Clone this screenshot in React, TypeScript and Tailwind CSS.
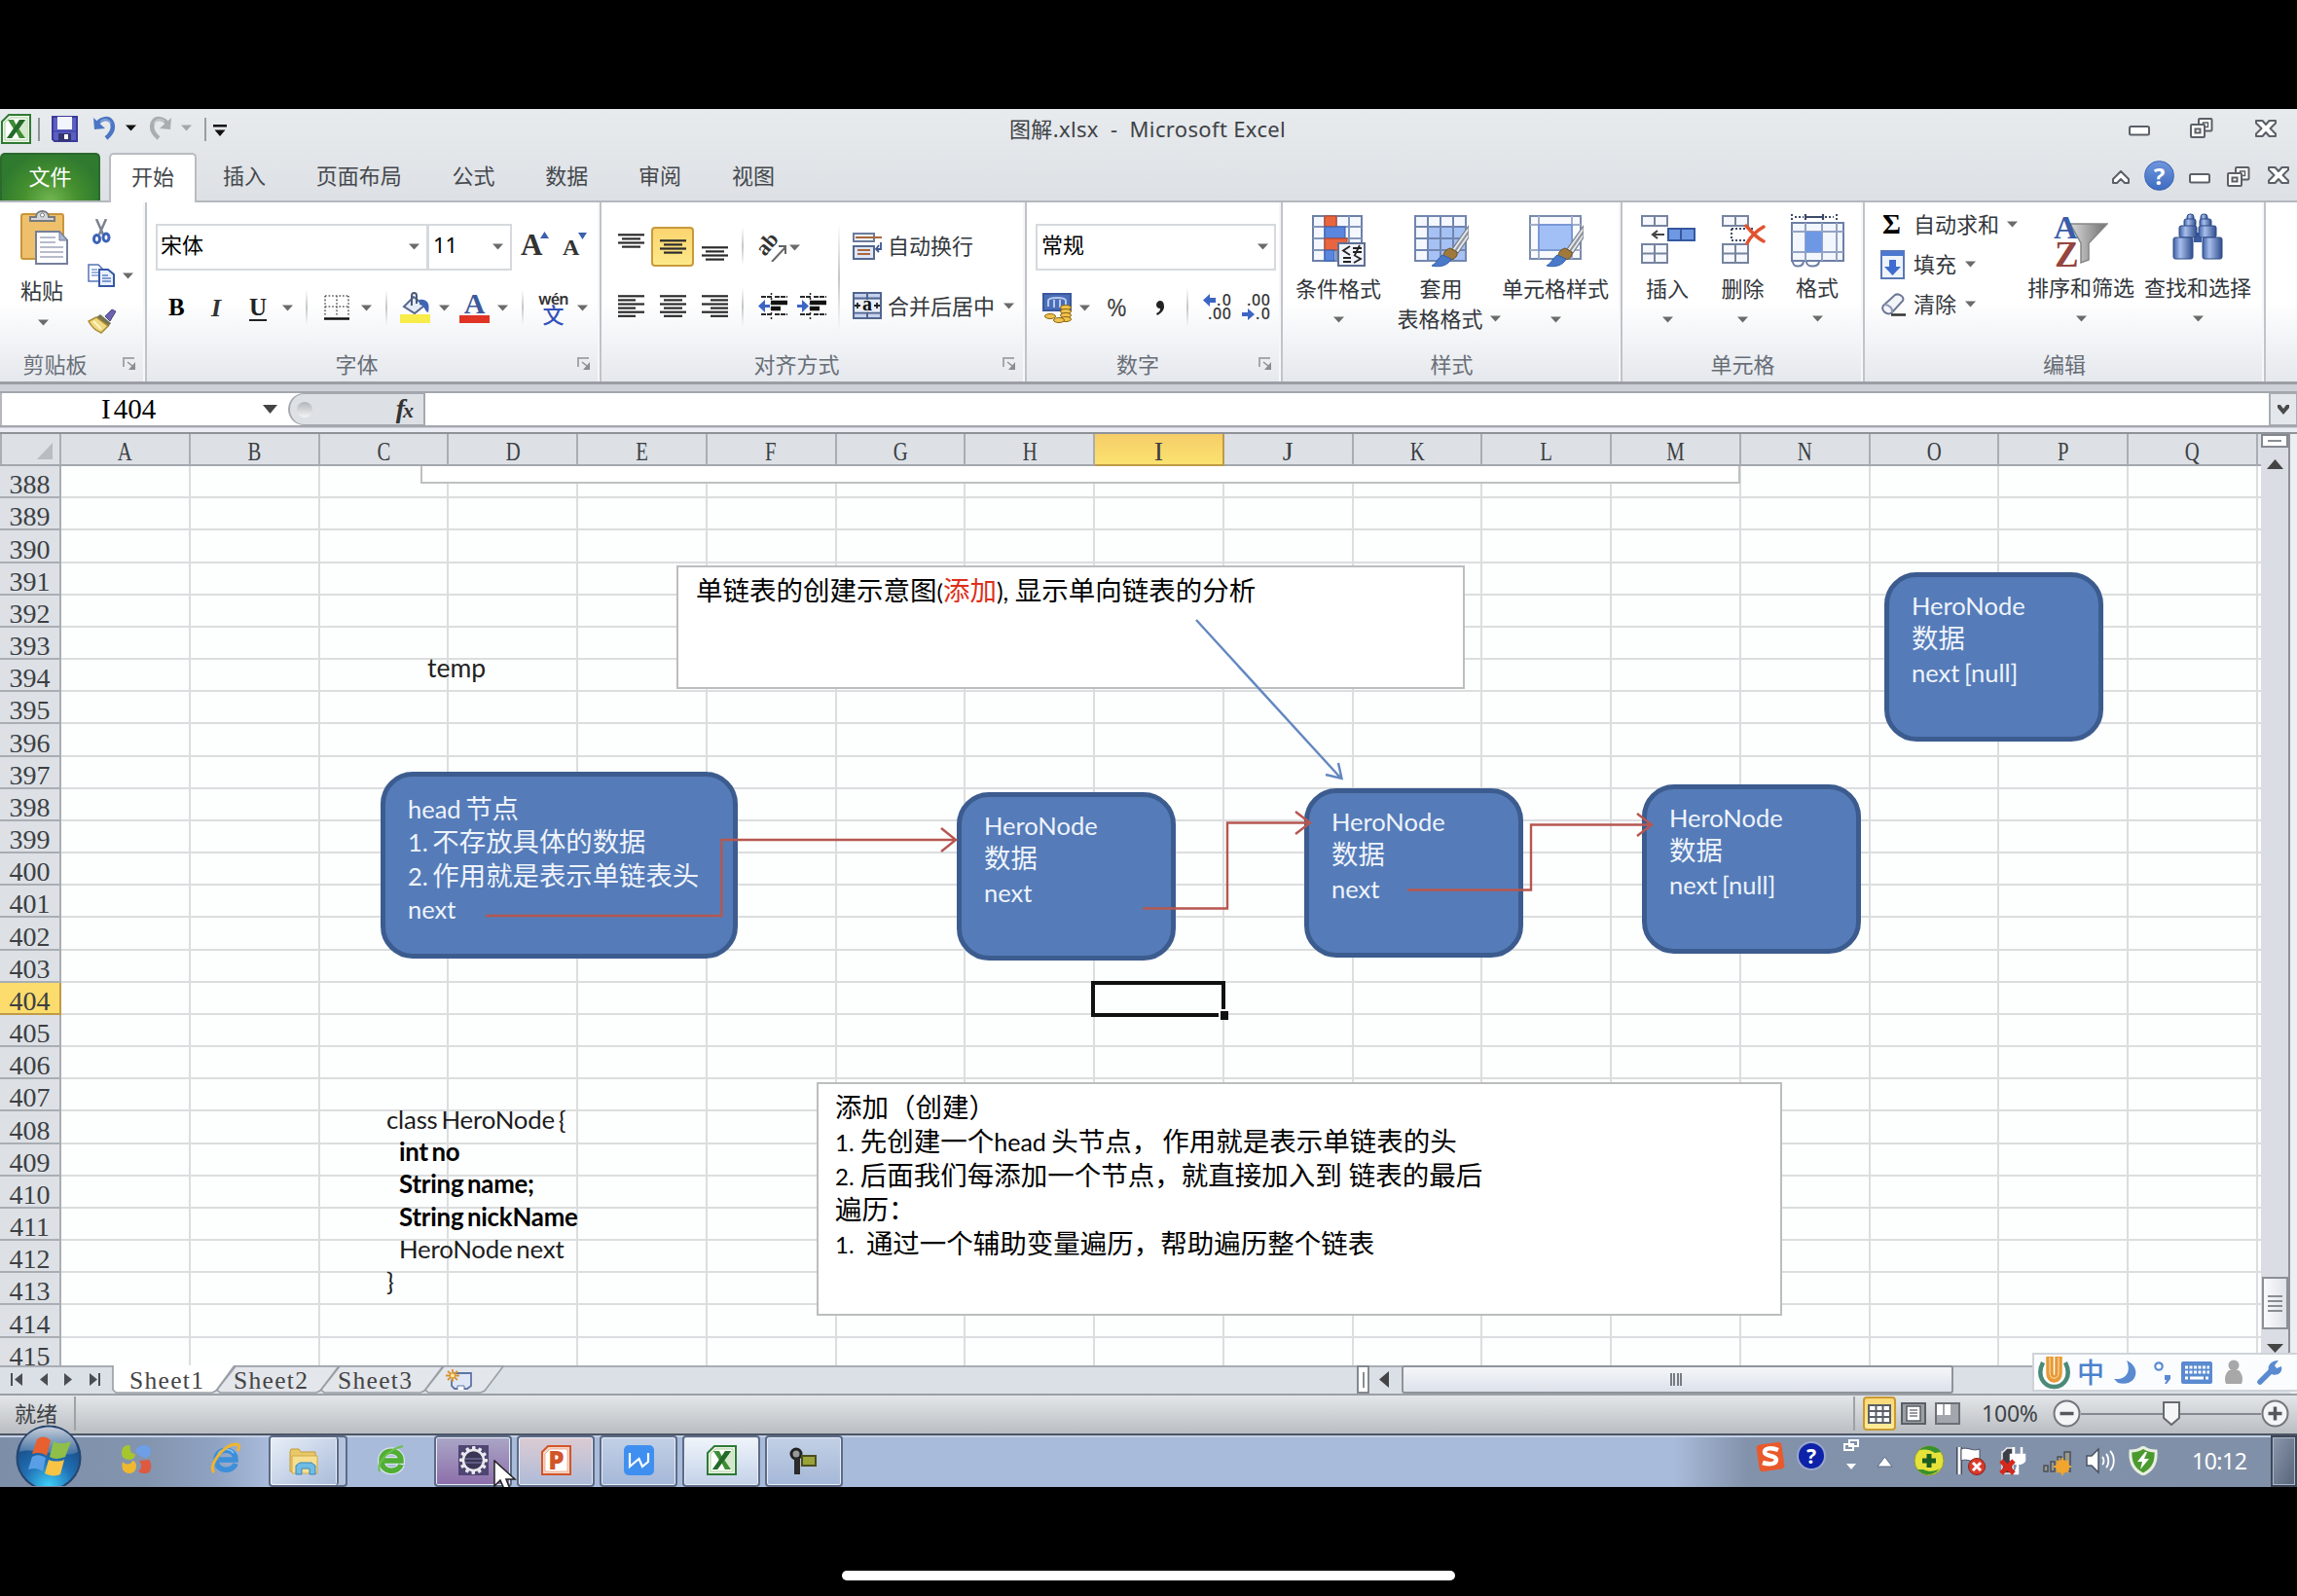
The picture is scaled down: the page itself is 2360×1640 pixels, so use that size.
import React from "react";

const UI = "font-['Noto_Sans','Noto_Sans_CJK_SC',sans-serif]";
const SONG = "font-['Liberation_Serif','Noto_Sans_CJK_SC',serif]";
const BOX = "font-['Lato','Noto_Sans_CJK_SC',sans-serif]";

type IconProps = { className?: string };

function Svg({ w, h, className = "", children }: { w: number; h: number; className?: string; children: React.ReactNode }) {
  return (
    <svg width={w} height={h} viewBox={`0 0 ${w} ${h}`} fill="none" className={"block shrink-0 " + className}>
      {children}
    </svg>
  );
}

function Caret({ className = "", color = "#6b6b6b" }: IconProps & { color?: string }) {
  return (
    <Svg w={11} h={7} className={className}>
      <path d="M0 0.5H11L5.5 6.5Z" fill={color} />
    </Svg>
  );
}

function Sep({ className = "" }: IconProps) {
  return <div className={"w-[2px] shrink-0 bg-gradient-to-b from-transparent via-[#c3c6ca] to-transparent " + className} />;
}

/* ---------- title bar ---------- */

function ExcelLogo({ className = "" }: IconProps) {
  return (
    <Svg w={31} h={31} className={className}>
      <path d="M1 8L8 1H30V30H1Z" fill="#eef5ea" stroke="#2f7a35" strokeWidth="2" />
      <path d="M4 9L9 4H27V27H4Z" fill="#fff" stroke="#a9d09a" />
      <path d="M18 6H26V25H18Z" fill="#d5e8cd" />
      <path d="M7 6H13L16 12L20 6H25L18.500 15.500L25 25H19L15.500 18.500L11 25H6L13 15.500Z" fill="#3e8d36" />
      <path d="M19 6H25L11 25H6Z" fill="#236b2b" />
    </Svg>
  );
}

function SaveIcon({ className = "" }: IconProps) {
  return (
    <Svg w={27} h={27} className={className}>
      <path d="M1 1H26V26H3L1 24Z" fill="#5b5fc4" stroke="#3b3b99" strokeWidth="2" />
      <path d="M6 1H21V14H6Z" fill="#f3f5fc" />
      <path d="M7 18H20V26H7Z" fill="#33356f" />
      <path d="M13 19H17V24H13Z" fill="#fff" />
      <path d="M2 15H25V17H2Z" fill="#4a4cae" />
    </Svg>
  );
}

function UndoIcon({ className = "", color = "#4b76c4", flip = false }: IconProps & { color?: string; flip?: boolean }) {
  return (
    <Svg w={24} h={25} className={(flip ? "-scale-x-100 " : "") + className}>
      <path d="M4 9C9 2 17 1 20 7C22 12 20 18 14 23" stroke={color} strokeWidth="4.500" />
      <path d="M1 2L2 14L13 13Z" fill={color} />
      <path d="M8 6C13 2 17 4 19 8" stroke="#ffffff" strokeOpacity=".35" strokeWidth="1.500" />
    </Svg>
  );
}

function MinIcon({ className = "" }: IconProps) {
  return (
    <Svg w={22} h={11} className={className}>
      <rect x="1" y="1" width="20" height="8.500" rx="1.500" fill="#fff" stroke="#5b6068" strokeWidth="2" />
    </Svg>
  );
}

function RestoreIcon({ className = "" }: IconProps) {
  return (
    <Svg w={24} h={21} className={className}>
      <rect x="9" y="1" width="13.500" height="12.500" rx="1" fill="#fff" stroke="#5b6068" strokeWidth="2" />
      <rect x="13.500" y="5" width="5" height="4.500" stroke="#5b6068" strokeWidth="1.500" />
      <rect x="1" y="7" width="14" height="13" rx="1" fill="#fff" stroke="#5b6068" strokeWidth="2" />
      <rect x="5.500" y="11.500" width="5" height="4" stroke="#5b6068" strokeWidth="2" />
    </Svg>
  );
}

function CloseIcon({ className = "" }: IconProps) {
  return (
    <Svg w={22} h={18} className={className}>
      <path d="M1 1H7.500L11 5L14.500 1H21V3.500L15.500 9L21 14.500V17H14.500L11 13L7.500 17H1V14.500L6.500 9L1 3.500Z" fill="#fff" stroke="#5b6068" strokeWidth="2" strokeLinejoin="round" />
    </Svg>
  );
}

function TitleBar() {
  return (
    <div className="relative flex h-[45px] items-start">
      <ExcelLogo className="mt-[5px] ml-[1px]" />
      <div className="mt-[9px] ml-[7px] h-[24px] w-[2px] bg-[#8f9398]" />
      <SaveIcon className="mt-[7px] ml-[12px]" />
      <UndoIcon className="mt-[7px] ml-[15px]" />
      <Caret className="mt-[16px] ml-[10px]" color="#111" />
      <UndoIcon className="mt-[7px] ml-[13px]" color="#a9adb1" flip />
      <Caret className="mt-[16px] ml-[9px]" color="#a3a6aa" />
      <div className="mt-[9px] ml-[13px] h-[24px] w-[2px] bg-[#9a9ea3]" />
      <Svg w={14} h={12} className="mt-[16px] ml-[7px]">
        <path d="M0 0H14V2.500H0ZM1.500 5.500H12.500L7 12Z" fill="#111" />
      </Svg>
      <div className="mt-[4px] ml-[804px] w-[300px] text-[22px] leading-[32px] whitespace-pre tracking-[0.35px] text-[#3f4347]">图解.xlsx  -  Microsoft Excel</div>
      <div className="ml-auto flex pr-[21px]">
        <MinIcon className="mt-[17px]" />
        <RestoreIcon className="mt-[9px] ml-[41px]" />
        <CloseIcon className="mt-[11px] ml-[43px]" />
      </div>
    </div>
  );
}

/* ---------- ribbon tabs ---------- */

const tabs = ["插入", "页面布局", "公式", "数据", "审阅", "视图"];

function TabRow() {
  return (
    <div className="flex h-[51px] items-end border-b-2 border-[#b4b8be] text-[22px] text-[#44484d]">
      <div className="flex h-[49px] w-[103px] items-center justify-center rounded-t-[5px] border-2 border-b-0 border-[#2a6a2d] bg-[radial-gradient(ellipse_at_50%_105%,#74b854_0%,#46902f_40%,#2f7a2f_75%)] pb-[3px] text-white">文件</div>
      <div className="z-10 -mb-[2px] ml-[9px] flex h-[51px] w-[90px] items-center justify-center rounded-t-[5px] border-2 border-b-0 border-[#b9bcc1] bg-white pb-[5px]">开始</div>
      <div className="ml-[1px] flex h-[49px] items-center pb-[3px]">
        {tabs.map((t) => (
          <div key={t} className="px-[25.900px]">{t}</div>
        ))}
      </div>
      <div className="ml-auto flex h-[49px] items-start pr-[8px]">
        <Svg w={18} h={14} className="mt-[18px]">
          <path d="M1 9L9 1L17 9V13H13L9 9L5 13H1Z" fill="#fff" stroke="#5b6068" strokeWidth="2" strokeLinejoin="round" />
        </Svg>
        <div className="mt-[8px] ml-[15px] flex size-[31px] items-center justify-center rounded-full border border-[#3a64b4] bg-gradient-to-b from-[#6f95dc] to-[#3e6cc0] text-[24px] leading-none font-bold text-white">?</div>
        <MinIcon className="mt-[21px] ml-[15px]" />
        <RestoreIcon className="mt-[14px] ml-[17px]" />
        <CloseIcon className="mt-[14px] ml-[18px]" />
      </div>
    </div>
  );
}

/* ---------- ribbon icons ---------- */

function Launcher({ className = "" }: IconProps) {
  return (
    <Svg w={14} h={13} className={className}>
      <path d="M1 10V1H12" stroke="#a4a8ad" strokeWidth="2" />
      <path d="M5 5L10 9" stroke="#8a8e93" strokeWidth="1.500" />
      <path d="M13 5V13H6Z" fill="#8a8e93" />
    </Svg>
  );
}

function PasteIcon() {
  return (
    <Svg w={50} h={57}>
      <rect x="1" y="4" width="43" height="46" rx="2" fill="#eec06b" stroke="#c9963c" strokeWidth="2" />
      <path d="M10 11V7H16C16 -1 29 -1 29 7H35V11Z" fill="#d5d7da" stroke="#777b80" strokeWidth="2" />
      <circle cx="22.500" cy="5" r="2" fill="#fff" stroke="#777b80" />
      <path d="M16 22H40L48 31V55H16Z" fill="#fdfdff" stroke="#74809b" strokeWidth="2" />
      <path d="M40 22V31H48Z" fill="#aab6d2" stroke="#74809b" />
      <path d="M20 28H36M20 33H36M20 38H44M20 43H44M20 48H44" stroke="#b7bccb" strokeWidth="2" />
    </Svg>
  );
}

function CutIcon({ className = "" }: IconProps) {
  return (
    <Svg w={19} h={26} className={className}>
      <path d="M4 0L11 16M14 0L7 16" stroke="#7b8390" strokeWidth="2.500" />
      <ellipse cx="4.500" cy="20.500" rx="3" ry="4" stroke="#3c63b8" strokeWidth="3" />
      <ellipse cx="14" cy="19" rx="3" ry="4" stroke="#3c63b8" strokeWidth="3" />
    </Svg>
  );
}

function CopyIcon({ className = "" }: IconProps) {
  return (
    <Svg w={28} h={24} className={className}>
      <path d="M1 1H11L15 5V18H1Z" fill="#fff" stroke="#5474b8" strokeWidth="1.500" />
      <path d="M4 6H10M4 9H11M4 12H11" stroke="#7f9bd2" strokeWidth="1.500" />
      <path d="M12 6H21L27 11V23H12Z" fill="#e9f0fc" stroke="#3558a6" strokeWidth="2" />
      <path d="M15 12H21M15 15H24M15 18H24" stroke="#5c7fc6" strokeWidth="1.500" />
    </Svg>
  );
}

function BrushIcon({ className = "" }: IconProps) {
  return (
    <Svg w={30} h={26} className={className}>
      <path d="M18 8L25 1L29 3L23 13Z" fill="#6b62b0" stroke="#4b4586" />
      <path d="M13 6L24 15L21 19L9 9Z" fill="#77744f" />
      <path d="M9 9L21 18L14 25C9 23 4 19 1 13Z" fill="#f0d97e" stroke="#a98c37" strokeWidth="1.500" />
      <path d="M6 13L14 21" stroke="#fff6c8" strokeWidth="2" />
    </Svg>
  );
}

function Lines({ rows, className = "", h = 24 }: { rows: [number, number][]; className?: string; h?: number }) {
  return (
    <Svg w={27} h={h} className={className}>
      {rows.map(([a, b], i) => (
        <path key={i} d={`M${a} ${i * 4.1 + 1.3}H${b}`} stroke="#2b2b2b" strokeWidth="2.200" />
      ))}
    </Svg>
  );
}

const shortLines: [number, number][] = [[0, 27], [4, 23], [0, 27], [4, 23]];
const leftLines: [number, number][] = [[0, 27], [0, 18], [0, 27], [0, 18], [0, 27], [0, 18]];
const midLines: [number, number][] = [[0, 27], [4, 23], [0, 27], [4, 23], [0, 27], [4, 23]];
const rightLines: [number, number][] = [[0, 27], [9, 27], [0, 27], [9, 27], [0, 27], [9, 27]];

function BordersIcon({ className = "" }: IconProps) {
  return (
    <Svg w={26} h={26} className={className}>
      <path d="M1 1H25M1 12H25M1 1V22M13 1V22M25 1V22" stroke="#5c5c5c" strokeWidth="1.600" strokeDasharray="1.600 2" />
      <path d="M0 24.500H26" stroke="#111" strokeWidth="2.500" />
    </Svg>
  );
}

function BucketIcon({ className = "" }: IconProps) {
  return (
    <Svg w={31} h={32} className={className}>
      <path d="M14 5L25 14L15 22L4 15Z" fill="#e5ebf6" stroke="#56688d" strokeWidth="2" />
      <path d="M12 14V4C12 0 17 0 17 4V12" stroke="#4b5a79" strokeWidth="2" />
      <path d="M20 8C28 7 31 12 29 21C25 20 26 14 20 13Z" fill="#3f66b4" />
      <rect y="23" width="31" height="9" fill="#f7ec49" />
    </Svg>
  );
}

function FontColorIcon({ className = "" }: IconProps) {
  return (
    <div className={"flex w-[31px] shrink-0 flex-col items-center " + className}>
      <div className={"h-[21px] text-[30px] leading-[22px] font-bold text-[#3c5a9a] " + SONG}>A</div>
      <div className="mt-[2px] h-[8px] w-[31px] bg-[#e03424]" />
    </div>
  );
}

function PhoneticIcon({ className = "" }: IconProps) {
  return (
    <div className={"flex w-[31px] shrink-0 flex-col items-center " + className}>
      <div className="h-[13px] text-[16px] leading-[12px] font-semibold tracking-[-0.8px] text-[#333]">wén</div>
      <div className="h-[18px] text-[22px] leading-[19px] font-medium text-[#3350b8]">文</div>
    </div>
  );
}

function OrientIcon({ className = "" }: IconProps) {
  return (
    <Svg w={30} h={28} className={className}>
      <text x="0" y="0" transform="translate(7 23) rotate(-50)" fontFamily="Liberation Serif" fontWeight="700" fontSize="22" fill="#333">ab</text>
      <path d="M14 28L28 13M28 20V12H21" stroke="#666" strokeWidth="2" />
    </Svg>
  );
}

function IndentIcon({ className = "", inward = false }: IconProps & { inward?: boolean }) {
  return (
    <Svg w={30} h={28} className={className}>
      <path d="M3 4H14M17 4H30M3 22H14M17 22H30" stroke="#2b2b2b" strokeWidth="2.200" strokeDasharray="5 1" />
      <path d="M13 10H30M13 16H23" stroke="#111" strokeWidth="4.500" />
      <path d="M13.500 0V28" stroke="#222" strokeWidth="1.500" strokeDasharray="2 3" />
      {inward ? <path d="M0 12H5V7L12 13.500L5 20V15H0Z" fill="#3c66c4" /> : <path d="M12 12H7V7L0 13.500L7 20V15H12Z" fill="#3c66c4" />}
    </Svg>
  );
}

function WrapIcon({ className = "" }: IconProps) {
  return (
    <Svg w={30} h={28} className={className}>
      <rect x="1" y="1" width="21" height="8" fill="#eef2fa" stroke="#6b7b9c" strokeWidth="2" />
      <path d="M3 5H30" stroke="#a9673f" strokeWidth="2" />
      <rect x="1" y="14" width="21" height="13" fill="#dfe6f4" stroke="#54688f" strokeWidth="2" />
      <path d="M5 18H18M5 22H18" stroke="#a9673f" strokeWidth="2" />
      <path d="M29 10V17H25M27 13L24 17L27 20" stroke="#3b5691" strokeWidth="1.800" />
    </Svg>
  );
}

function MergeIcon({ className = "" }: IconProps) {
  return (
    <Svg w={30} h={28} className={className}>
      <rect x="1" y="1" width="28" height="26" fill="#c5d2ec" stroke="#51658f" strokeWidth="2" />
      <path d="M15 1V27M1 6.500H29M1 21.500H29" stroke="#51658f" strokeWidth="2" />
      <rect x="2" y="8" width="26" height="12.500" fill="#e9eefa" />
      <text x="10" y="19" fontFamily="Liberation Serif" fontWeight="700" fontSize="20" fill="#111">a</text>
      <path d="M2 14H8M5 11V17M22 14H28M25 11V17" stroke="#222" strokeWidth="1.800" />
    </Svg>
  );
}

function CurrencyIcon({ className = "" }: IconProps) {
  return (
    <Svg w={31} h={31} className={className}>
      <rect x="1" y="1" width="28" height="17" fill="#4a6eb8" stroke="#3a589c" strokeWidth="2" />
      <path d="M6 14V8C6 4 24 4 24 8V14M12 15V7M18 15V7" stroke="#b8c9ec" strokeWidth="2" />
      {[15, 19, 23, 27].map((y) => (
        <ellipse key={y} cx="24" cy={y} rx="5.500" ry="2.500" fill="#f0c34e" stroke="#8c6412" />
      ))}
      <ellipse cx="8" cy="24" rx="5.500" ry="2.500" fill="#f0c34e" stroke="#8c6412" />
      <ellipse cx="17" cy="28" rx="5.500" ry="2.500" fill="#f0c34e" stroke="#8c6412" />
    </Svg>
  );
}

function DecimalIcon({ className = "", less = false }: IconProps & { less?: boolean }) {
  return (
    <Svg w={30} h={28} className={className}>
      {less ? (
        <g>
          <text x="5" y="12" textLength="24" fontFamily="Noto Sans" fontWeight="500" fontSize="16" fill="#333">.00</text>
          <text x="14" y="26" textLength="15" fontFamily="Noto Sans" fontWeight="500" fontSize="16" fill="#333">.0</text>
          <path d="M0 19H6V15L13 21L6 27V23H0Z" fill="#3c66c4" />
        </g>
      ) : (
        <g>
          <text x="14" y="12" textLength="15" fontFamily="Noto Sans" fontWeight="500" fontSize="16" fill="#333">.0</text>
          <text x="5" y="26" textLength="24" fontFamily="Noto Sans" fontWeight="500" fontSize="16" fill="#333">.00</text>
          <path d="M13 4H7V0L0 6.500L7 13V9H13Z" fill="#3c66c4" />
        </g>
      )}
    </Svg>
  );
}

function Brush() {
  return (
    <g>
      <path d="M57 12L40 36L46 40L57 24Z" fill="#e4e6ea" stroke="#777d88" strokeWidth="1.200" />
      <path d="M57 18L43 38" stroke="#8d939c" strokeWidth="2" />
      <path d="M38 35C34 36 31 39 31 43L38 47C43 46 46 43 45 39Z" fill="#a07a3c" stroke="#6b4f23" />
      <path d="M30 42C25 45 24 51 19 53C27 55 36 53 39 46Z" fill="#4a79c9" stroke="#3260ac" />
    </g>
  );
}

function CondIcon() {
  return (
    <Svg w={57} h={55}>
      <rect x="2" y="2" width="50" height="46" fill="#f4f7fd" stroke="#6d80a8" strokeWidth="2" />
      <path d="M14 2V48M26 2V48M39 2V48M2 13H52M2 25H52M2 37H52" stroke="#8496bb" strokeWidth="2" />
      <rect x="14" y="2" width="12" height="11" fill="#e8653f" stroke="#b9421f" />
      <rect x="14" y="13" width="21" height="12" fill="#5a86dd" stroke="#335eb0" />
      <rect x="14" y="25" width="23" height="12" fill="#e8653f" stroke="#b9421f" />
      <rect x="14" y="37" width="10" height="11" fill="#5a86dd" stroke="#335eb0" />
      <rect x="28" y="30" width="27" height="23" fill="#f1f4fb" stroke="#5f6f93" strokeWidth="2" />
      <path d="M40 33L33 37.500L40 42M33 45H41M33 49H41M43 35H52M43 39H52M50 32L45 42M44 42L51 46L44 50" stroke="#222" strokeWidth="1.800" />
    </Svg>
  );
}

function TableIcon() {
  return (
    <Svg w={57} h={55}>
      <rect x="2" y="2" width="52" height="46" fill="#f4f7fd" />
      <rect x="15" y="13" width="39" height="35" fill="#a6c1f3" />
      <path d="M2 2H54V48H2ZM15 2V48M28 2V48M41 2V48M2 13H54M2 25H54M2 37H54" stroke="#7186b0" strokeWidth="2" />
      <Brush />
    </Svg>
  );
}

function CellStyleIcon() {
  return (
    <Svg w={57} h={55}>
      <path d="M2 2H54V46H2Z" fill="#f8fafe" stroke="#7a8aac" strokeWidth="2" />
      <path d="M11 2V46M45 2V46M2 11H54M2 37H54" stroke="#a3afc9" strokeWidth="2" />
      <rect x="11" y="11" width="34" height="26" fill="#a3c0f6" stroke="#6d8fd1" strokeWidth="1.500" />
      <Brush />
    </Svg>
  );
}

function GridPair({ y, h }: { y: number; h: number }) {
  return (
    <g stroke="#76849f" strokeWidth="2">
      <rect x="2" y={y} width="26" height={h} fill="#f6f8fd" />
      <path d={`M15 ${y}V${y + h}`} />
    </g>
  );
}

function InsertCellsIcon() {
  return (
    <Svg w={57} h={52}>
      <GridPair y={2} h={10} />
      <GridPair y={31} h={19} />
      <path d="M2 40.500H28" stroke="#76849f" strokeWidth="2" />
      <rect x="29" y="15" width="27" height="12" fill="#6f98e4" stroke="#34589f" strokeWidth="2" />
      <path d="M42 15V27" stroke="#34589f" strokeWidth="2" />
      <path d="M25 21H13M18 17L13 21L18 25" stroke="#444" strokeWidth="2.200" />
    </Svg>
  );
}

function DeleteCellsIcon() {
  return (
    <Svg w={46} h={52}>
      <GridPair y={2} h={10} />
      <GridPair y={31} h={19} />
      <path d="M2 40.500H28" stroke="#76849f" strokeWidth="2" />
      <path d="M11 15H34M11 27H30M11 15V27" stroke="#3d4a67" strokeWidth="2" strokeDasharray="2 2" />
      <path d="M26 12C32 19 38 25 44 28M44 13C37 17 31 22 27 30" stroke="#e0532f" strokeWidth="3.500" strokeLinecap="round" />
    </Svg>
  );
}

function FormatCellsIcon() {
  return (
    <Svg w={57} h={56}>
      <path d="M2 1V7M48 1V7M5 4H14M36 4H45" stroke="#3d4a67" strokeWidth="2" strokeDasharray="2 2" />
      <path d="M15 4H35M16 1V7M34 1V7" stroke="#3d4a67" strokeWidth="2.200" />
      <rect x="2" y="10" width="53" height="39" fill="#f2f6fd" stroke="#6d7fa6" strokeWidth="2" />
      <path d="M16 10V49M33 10V49M48 10V49M2 19H55M2 40H55" stroke="#93a3c4" strokeWidth="2" />
      <rect x="16" y="19" width="17" height="21" fill="#6f98e4" />
      <path d="M3 50C3 56 13 56 14 50M17 50C17 56 29 56 30 50" fill="#fff" stroke="#6d7fa6" strokeWidth="2" />
    </Svg>
  );
}

function FillDownIcon({ className = "" }: IconProps) {
  return (
    <Svg w={26} h={30} className={className}>
      <rect x="1" y="1" width="23" height="28" fill="#eef3fc" stroke="#5b78b5" strokeWidth="2" />
      <rect x="1" y="1" width="23" height="5" fill="#4d78cf" />
      <path d="M9 10H16V17H21L12.500 26L4 17H9Z" fill="#3f6cd0" />
    </Svg>
  );
}

function EraserIcon({ className = "" }: IconProps) {
  return (
    <Svg w={26} h={24} className={className}>
      <path d="M3 13L15 2C19 0 25 4 23 8L12 20C7 24 0 18 3 13Z" fill="#f3f5fa" stroke="#6d7894" strokeWidth="2" />
      <path d="M4 12C9 12 13 16 12 20" stroke="#8d98b4" strokeWidth="2" />
      <path d="M11 22.500H26" stroke="#333" strokeWidth="2.500" />
    </Svg>
  );
}

function SortFilterIcon() {
  return (
    <Svg w={56} h={56}>
      <defs>
        <linearGradient id="fn" x1="0" x2="1"><stop offset="0" stopColor="#d9d9d9" /><stop offset="1" stopColor="#6f6f6f" /></linearGradient>
      </defs>
      <path d="M17 11H55L36 31V48L28 51V31Z" fill="url(#fn)" stroke="#868686" strokeWidth="1.500" />
      <text x="0" y="26" fontFamily="Liberation Serif" fontWeight="700" fontSize="34" fill="#3a5caa">A</text>
      <text x="1" y="55" fontFamily="Liberation Serif" fontWeight="700" fontSize="37" fill="#95453f">Z</text>
    </Svg>
  );
}

function FindIcon() {
  return (
    <Svg w={52} h={50}>
      <defs>
        <linearGradient id="bn" x1="0" x2="1"><stop offset="0" stopColor="#3d5fa4" /><stop offset=".35" stopColor="#a8bfec" /><stop offset="1" stopColor="#2f4d8d" /></linearGradient>
      </defs>
      <rect x="22" y="20" width="8" height="10" fill="#3b5ba0" />
      {[0, 30].map((x) => (
        <g key={x} fill="url(#bn)" stroke="#2f4b86" strokeWidth="1">
          <rect x={x ? 29 : 15} y="1" width="7" height="8" rx="3" />
          <rect x={x ? 28 : 12} y="6" width="12" height="8" rx="2" />
          <rect x={x ? 27 : 7} y="13" width="18" height="12" rx="2" />
          <rect x={x ? 31 : 1} y="25" width="20" height="22" rx="2" />
        </g>
      ))}
    </Svg>
  );
}

/* ---------- ribbon ---------- */

function Group({ w, label, shift = "", launcher = false, children }: { w: string; label: string; shift?: string; launcher?: boolean; children: React.ReactNode }) {
  return (
    <div className={"flex h-full shrink-0 flex-col border-r-2 border-[#c0c3c8] shadow-[inset_-2px_0_0_#f6f7f8] " + w}>
      <div className="h-[149px]">{children}</div>
      <div className="flex h-[33px] items-center text-[22px] text-[#686e77]">
        <div className={"flex-1 text-center leading-[30px] " + shift}>{label}</div>
        {launcher && <Launcher className="mr-[9px] -ml-[23px]" />}
      </div>
    </div>
  );
}

function BigButton({ w, icon, label, label2 = "", pad = "pt-[12px]" }: { w: string; icon: React.ReactNode; label: string; label2?: string; pad?: string }) {
  return (
    <div className={"flex shrink-0 flex-col items-center text-[22px] leading-[31px] text-[#33373c] " + w + " " + pad}>
      <div className="flex h-[57px] items-start">{icon}</div>
      <div className="mt-[4px] whitespace-nowrap">{label}</div>
      {label2 ? (
        <div className="flex items-center gap-[7px] pl-[16px] whitespace-nowrap">
          {label2}
          <Caret />
        </div>
      ) : (
        <Caret className="mt-[13px]" />
      )}
    </div>
  );
}

function Ribbon() {
  return (
    <div className="flex h-[187px] border-b-[3px] border-[#9b9fa5] bg-gradient-to-b from-white from-55% to-[#e5e8ed] text-[22px] text-[#33373c]">
      <Group w="w-[151px]" label="剪贴板" shift="pr-[36px]" launcher>
        <div className="flex pl-[21px]">
          <div className="flex w-[50px] flex-col pt-[8px]">
            <PasteIcon />
            <div className="mt-[10px] leading-[30px]">粘贴</div>
            <Caret className="mt-[15px] ml-[18px]" />
          </div>
          <div className="ml-[19px] flex flex-col">
            <CutIcon className="mt-[17px] ml-[5px]" />
            <div className="mt-[20px] flex items-center gap-[8px]">
              <CopyIcon />
              <Caret />
            </div>
            <BrushIcon className="mt-[22px]" />
          </div>
        </div>
      </Group>

      <Group w="w-[467px]" label="字体" shift="pr-[34px]" launcher>
        <div className="flex h-[70px] pt-[22px] pl-[9px]">
          <div className="flex h-[48px] w-[280px] items-center justify-between border-2 border-[#d6d9dd] bg-white pr-[7px] pb-[6px] pl-[3px] text-black">
            宋体
            <Caret className="mt-[4px]" />
          </div>
          <div className="-ml-[1px] flex h-[48px] w-[87px] items-center justify-between border-2 border-[#d6d9dd] bg-white pr-[7px] pb-[6px] pl-[4px] text-black">
            11
            <Caret className="mt-[4px]" />
          </div>
          <div className={"mt-[4px] ml-[9px] flex font-bold text-[#333] " + SONG}>
            <span className="w-[22px] text-[31px] leading-[36px]">A</span>
            <Svg w={9} h={7} className="-ml-[2px] mt-[4px]"><path d="M0 7L4.500 0L9 7Z" fill="#3c5fae" /></Svg>
            <span className="ml-[14px] w-[17px] text-[24px] leading-[41px]">A</span>
            <Svg w={9} h={7} className="-ml-[1px] mt-[5px]"><path d="M0 0L4.500 7L9 0Z" fill="#3c5fae" /></Svg>
          </div>
        </div>
        <div className="flex h-[76px] items-center pl-[22px]">
          <span className={"w-[44px] text-[25px] font-bold text-black " + SONG}>B</span>
          <span className={"w-[39px] text-[26px] font-bold italic text-[#333] " + SONG}>I</span>
          <span className={"w-[34px] border-none text-[25px] font-bold text-[#222] underline decoration-2 underline-offset-4 " + SONG}>U</span>
          <Caret />
          <Sep className="ml-[13px] h-[36px]" />
          <BordersIcon className="ml-[17px]" />
          <Caret className="ml-[12px]" />
          <Sep className="ml-[14px] h-[36px]" />
          <BucketIcon className="ml-[13px]" />
          <Caret className="ml-[9px]" />
          <FontColorIcon className="ml-[10px]" />
          <Caret className="ml-[8px]" />
          <Sep className="ml-[14px] h-[36px]" />
          <PhoneticIcon className="ml-[15px]" />
          <Caret className="ml-[9px]" />
        </div>
      </Group>

      <Group w="w-[437px]" label="对齐方式" shift="pr-[34px]" launcher>
        <div className="flex h-full">
          <div className="flex w-[243px] flex-col">
            <div className="flex h-[70px] items-start pt-[25px]">
              <Lines rows={shortLines} h={16} className="mt-[7px] ml-[17px]" />
              <div className="ml-[7px] flex h-[41px] w-[44px] items-center justify-center rounded-[4px] border-2 border-[#c79b3c] bg-gradient-to-b from-[#fbd56f] to-[#fde98a]">
                <Lines rows={shortLines} h={16} />
              </div>
              <Lines rows={shortLines} h={16} className="mt-[20px] ml-[8px]" />
              <Sep className="ml-[14px] h-[40px]" />
              <OrientIcon className="mt-[8px] ml-[15px]" />
              <Caret className="mt-[18px] ml-[2px]" />
            </div>
            <div className="flex h-[74px] items-center">
              <Lines rows={leftLines} className="ml-[17px]" />
              <Lines rows={midLines} className="ml-[16px]" />
              <Lines rows={rightLines} className="ml-[16px]" />
              <Sep className="ml-[14px] h-[40px]" />
              <IndentIcon className="ml-[15px]" />
              <IndentIcon className="ml-[10px]" inward />
            </div>
          </div>
          <Sep className="mt-[22px] h-[110px]" />
          <div className="ml-[13px] flex flex-col">
            <div className="flex h-[52px] items-center gap-[6px] pt-[37px]">
              <WrapIcon />
              自动换行
            </div>
            <div className="mt-[34px] flex h-[40px] items-center gap-[6px]">
              <MergeIcon />
              合并后居中
              <Caret className="ml-[3px]" />
            </div>
          </div>
        </div>
      </Group>

      <Group w="w-[263px]" label="数字" shift="pr-[33px]" launcher>
        <div className="flex h-[70px] pt-[22px] pl-[9px]">
          <div className="flex h-[48px] w-[247px] items-center justify-between border-2 border-[#d6d9dd] bg-white pr-[6px] pb-[6px] pl-[4px] text-black">
            常规
            <Caret className="mt-[4px]" />
          </div>
        </div>
        <div className="flex h-[76px] items-center pl-[16px]">
          <CurrencyIcon />
          <Caret className="ml-[7px]" />
          <span className="ml-[17px] w-[22px] text-[25px] text-[#444]">%</span>
          <Svg w={10} h={15} className="ml-[28px]">
            <path d="M5 0C8 0 9 3 9 6C9 10 6 13 2 15L1 13C4 12 5 10 5 8C2 8 1 6 1 4C1 2 3 0 5 0Z" fill="#222" />
          </Svg>
          <Sep className="ml-[22px] h-[40px]" />
          <DecimalIcon className="ml-[15px]" />
          <DecimalIcon className="ml-[10px]" less />
        </div>
      </Group>

      <Group w="w-[349px]" label="样式">
        <div className="flex">
          <BigButton w="w-[114px]" icon={<CondIcon />} label="条件格式" />
          <BigButton w="w-[97px]" icon={<TableIcon />} label="套用" label2="表格格式" />
          <BigButton w="w-[138px]" icon={<CellStyleIcon />} label="单元格样式" />
        </div>
      </Group>

      <Group w="w-[249px]" label="单元格">
        <div className="flex pl-[17px]">
          <BigButton w="w-[58px]" icon={<InsertCellsIcon />} label="插入" />
          <BigButton w="ml-[20px] w-[57px]" icon={<DeleteCellsIcon />} label="删除" />
          <BigButton w="ml-[19px] w-[58px]" icon={<FormatCellsIcon />} label="格式" pad="pt-[11px]" />
        </div>
      </Group>

      <Group w="w-[412px]" label="编辑">
        <div className="flex">
          <div className="flex w-[160px] flex-col pt-[2px] pl-[16px]">
            <div className="flex h-[41px] items-center">
              <span className={"w-[34px] pl-[2px] text-[29px] leading-none font-bold text-black " + SONG}>Σ</span>
              自动求和
              <Caret className="ml-[8px]" />
            </div>
            <div className="flex h-[41px] items-center">
              <FillDownIcon className="mr-[8px]" />
              填充
              <Caret className="ml-[9px]" />
            </div>
            <div className="flex h-[41px] items-center">
              <EraserIcon className="mr-[8px]" />
              清除
              <Caret className="ml-[9px]" />
            </div>
          </div>
          <BigButton w="ml-[2px] w-[120px]" icon={<SortFilterIcon />} label="排序和筛选" pad="pt-[11px]" />
          <BigButton w="w-[120px]" icon={<FindIcon />} label="查找和选择" pad="pt-[11px]" />
        </div>
      </Group>
    </div>
  );
}

/* ---------- formula bar ---------- */

function FormulaBar() {
  return (
    <div className="flex h-[51px] flex-col bg-[#cdd1d7]">
      <div className="mt-[7px] flex h-[37px] border-y-2 border-[#a3a7ad] bg-white">
        <div className="flex w-[296px] items-center border-l-2 border-[#b4b7bc]">
          <span className={"ml-[100px] w-[168px] text-[29px] leading-none text-black " + SONG}><span className="mr-[3px] ml-[2px]">I</span>404</span>
          <Svg w={15} h={9}><path d="M0 0H15L7.500 9Z" fill="#444" /></Svg>
        </div>
        <div className="flex w-[141px] items-center justify-between rounded-l-full border-y border-r-2 border-l-2 border-[#a5a9af] bg-[#dde1e6] pr-[12px] pl-[7px]">
          <div className="size-[16px] rounded-full bg-gradient-to-b from-[#b1b5ba] to-[#f4f5f6]" />
          <span className={"text-[28px] leading-[20px] font-bold tracking-[-2px] italic text-[#333] " + SONG}>f<span className="text-[22px]">x</span></span>
        </div>
        <div className="flex-1" />
        <div className="flex w-[29px] items-center justify-center border border-l-2 border-[#a9adb3] bg-[#e4e7eb]">
          <Svg w={14} h={11}><path d="M1 1H4L7 5L10 1H13V4L7 11L1 4Z" fill="#4a4a4a" /></Svg>
        </div>
      </div>
      <div className="mt-[1px] h-[4px] bg-[#e9ecf2]" />
      <div className="mt-auto h-[2px] bg-[#8f9399]" />
    </div>
  );
}

/* ---------- worksheet ---------- */

const columns = "ABCDEFGHIJKLMNOPQ".split("");
const rows = Array.from({ length: 28 }, (_, i) => 388 + i);

function Node({ pos, lines }: { pos: string; lines: string[] }) {
  return (
    <div className={"absolute rounded-[33px] border-[5px] border-[#3c5c8f] bg-[#557cb9] pl-[23px] text-[25.500px] leading-[34.700px] [word-spacing:-2px] whitespace-pre text-[#eef3fb] " + pos + " " + BOX}>
      {lines.map((l) => (
        <div key={l} className="h-[34.400px]">
          {l.split(/([\u4e00-\u9fff]+)/).map((part, i) =>
            i % 2 ? (
              <span key={i} className="text-[27.400px]">
                {part}
              </span>
            ) : (
              part
            )
          )}
        </div>
      ))}
    </div>
  );
}

const hero = ["HeroNode", "数据", "next"];
const heroEnd = ["HeroNode", "数据", "next [null]"];

function Drawing() {
  return (
    <div className={"absolute inset-0 overflow-hidden " + BOX}>
      <div className="absolute -top-[20px] left-[370px] h-[38px] w-[1356px] border-2 border-[#bfc0c2] bg-white" />
      <div className="absolute top-[102px] left-[633px] h-[127px] w-[810px] border-2 border-[#bcbdbf] bg-white pt-[6px] pl-[18px] text-[27.500px] leading-[36px] whitespace-pre text-black">
        单链表的创建示意图<span className="text-[24px]">(</span>
        <span className="text-[#dd2f1b]">添加</span>
        <span className="text-[25px]">), </span>显示单向链表的分析
      </div>
      <div className="absolute top-[191px] left-[377px] text-[26.500px] leading-[32px] text-[#222]">temp</div>

      <Node pos="top-[314px] left-[329px] h-[192px] w-[367px] pt-[16px]" lines={["head 节点", "1. 不存放具体的数据", "2. 作用就是表示单链表头", "next"]} />
      <Node pos="top-[335px] left-[921px] h-[173px] w-[225px] pt-[12px]" lines={hero} />
      <Node pos="top-[331px] left-[1278px] h-[174px] w-[225px] pt-[12px]" lines={hero} />
      <Node pos="top-[327px] left-[1625px] h-[174px] w-[225px] pt-[12px]" lines={heroEnd} />
      <Node pos="top-[109px] left-[1874px] h-[174px] w-[225px] pt-[12px]" lines={heroEnd} />

      <div className="absolute top-[655px] left-[335px] text-[25.800px] leading-[33.200px] tracking-[-0.2px] [word-spacing:-2.500px] whitespace-pre text-[#1c1c1c]">
        <div>{"class HeroNode {"}</div>
        <div className="pl-[13px] font-bold text-black">int no</div>
        <div className="pl-[13px] font-bold text-black">String name;</div>
        <div className="pl-[13px] font-bold text-black">String nickName</div>
        <div className="pl-[13px]">HeroNode next</div>
        <div>{"}"}</div>
      </div>

      <div className="absolute top-[633px] left-[777px] h-[240px] w-[992px] border-2 border-[#bcbdbf] bg-white pt-[6px] pl-[17px] text-[27.500px] leading-[35.200px] whitespace-pre text-black">
        <div className="h-[35.100px]">添加（创建）</div>
        <div className="h-[35.100px]"><span className="text-[24px]">1. </span>先创建一个<span className="text-[25px] [word-spacing:-1px]">head </span>头节点，<span className="text-[16px]"> </span>作用就是表示单链表的头</div>
        <div className="h-[35.100px]"><span className="text-[24px]">2. </span>后面我们每添加一个节点，就直接加入到 链表的最后</div>
        <div className="h-[35.100px]">遍历：</div>
        <div className="h-[35.100px]"><span className="text-[24px]">1.  </span>通过一个辅助变量遍历，帮助遍历整个链表</div>
      </div>

      <svg width="2262" height="925" viewBox="62 478 2262 925" fill="none" className="absolute top-0 left-0">
        <g stroke="#b65750" strokeWidth="2.400">
          <path d="M499 940H741.500V862H981" />
          <path d="M967 850L982 862L967 874" />
          <path d="M1174 932.500H1261V844.500H1346" />
          <path d="M1331 833L1346 844.500L1331 856" />
          <path d="M1446 913.500H1573V846.500H1696" />
          <path d="M1682 835L1697 846.500L1682 858" />
        </g>
        <path d="M1229 636L1378 799M1375 783L1378.500 799L1362 795" stroke="#6387c0" strokeWidth="2.400" />
      </svg>

      <div className="absolute top-[529px] left-[1059px] h-[37px] w-[138px] border-[4px] border-[#111]" />
      <div className="absolute top-[558px] left-[1190px] h-[11px] w-[10px] border-t-2 border-l-2 border-white bg-[#111]" />
    </div>
  );
}

function Worksheet() {
  return (
    <div className={"flex h-[957px] " + SONG}>
      <div className="flex w-[2323px] flex-col overflow-hidden">
        <div className="flex h-[33px] shrink-0 border-b-2 border-[#a3a8ae] bg-[#dde1e6] text-[28px] text-[#3c3f43]">
          <div className="flex w-[63px] shrink-0 items-end justify-end border-r-2 border-l-2 border-[#a9aeb4] pr-[7px] pb-[5px]">
            <Svg w={16} h={17}><path d="M16 0V17H0Z" fill="#b9bdc2" /></Svg>
          </div>
          {columns.map((c) => (
            <div
              key={c}
              className={
                "flex w-[132.750px] shrink-0 items-center justify-center border-r-2 pt-[5px] leading-none " +
                (c === "I" ? "-mb-[2px] border-b-2 border-[#c09a45] bg-gradient-to-b from-[#f6cd68] to-[#fbe26f] pb-[1px]" : "border-[#a9aeb4]")
              }
            >
              <span className={c === "I" || c === "J" ? "" : "scale-x-[0.74]"}>{c}</span>
            </div>
          ))}
        </div>
        <div className="flex h-[924px]">
          <div className="w-[63px] shrink-0 overflow-hidden bg-[#dde1e6] text-[28px] text-[#3c3f43]">
            {rows.map((r) => (
              <div
                key={r}
                className={
                  "flex h-[33.180px] items-end justify-center border-r-2 border-b-2 pt-[4px] leading-[30px] " +
                  (r === 404 ? "border-[#c09a45] bg-[#fbdc6c]" : "border-[#a9aeb4]")
                }
              >
                <span className="translate-y-[3px]">{r}</span>
              </div>
            ))}
          </div>
          <div className="relative -ml-px flex-1 overflow-hidden">
            <div className="ml-px bg-[#fdfefe]">
              {rows.map((r) => (
                <div key={r} className="flex h-[33.180px] border-b-2 border-[#dbddde]">
                  {columns.map((c) => (
                    <div key={c} className="w-[132.750px] shrink-0 border-r-2 border-[#dbddde]" />
                  ))}
                </div>
              ))}
            </div>
            <Drawing />
          </div>
        </div>
      </div>
      <div className="flex w-[30px] flex-col items-center border-r-2 border-[#8d9197] bg-[#dadde4]">
        <div className="flex h-[14px] w-[28px] items-center justify-center border-2 border-[#85898f] bg-white">
          <div className="h-[2px] w-[14px] bg-[#8a8e94]" />
        </div>
        <Svg w={17} h={10} className="mt-[12px]"><path d="M0 10H17L8.500 0Z" fill="#444" /></Svg>
        <div className="mt-[830px] flex h-[54px] w-[27px] shrink-0 flex-col items-center justify-center gap-[3px] border-2 border-[#8b9097] bg-gradient-to-r from-[#fafbfc] to-[#dfe2e8]">
          <div className="h-[2px] w-[15px] bg-[#888c93]" />
          <div className="h-[2px] w-[15px] bg-[#888c93]" />
          <div className="h-[2px] w-[15px] bg-[#888c93]" />
          <div className="h-[2px] w-[15px] bg-[#888c93]" />
        </div>
        <Svg w={17} h={9} className="mt-[15px]"><path d="M0 0H17L8.500 9Z" fill="#444" /></Svg>
      </div>
      <div className="flex-1 bg-[#eceef1]" />
    </div>
  );
}

/* ---------- sheet tabs ---------- */

function SheetTab({ label, active = false, w = 127 }: { label: React.ReactNode; active?: boolean; w?: number }) {
  return (
    <div className={"relative -mr-[20px] flex h-[29px] shrink-0 items-center pt-[2px] " + (active ? "z-20 w-[127px] pl-[18px]" : w === 127 ? "z-10 w-[127px] pl-[18px]" : "w-[82px] pl-[22px]")}>
      <Svg w={w} h={29} className="absolute top-0 left-0">
        <path d={active ? `M0 0H${w - 1}L${w - 20} 26L${w - 24} 28H4L1 25V0` : `M20 1H${w - 1}L${w - 20} 26L${w - 24} 28H4L1 25L20 1`} fill={active ? "#fff" : "#e3e6eb"} />
        <path d={active ? `M${w - 1} 0L${w - 20} 26L${w - 24} 28H4L1 25V0` : `M20 1H${w - 1}L${w - 20} 26L${w - 24} 28H4L1 25L20 1`} stroke="#9a9fa6" strokeWidth="1.600" />
      </Svg>
      <span className="relative text-[25.500px] leading-none tracking-[1.300px] text-[#444]">{label}</span>
    </div>
  );
}

function SheetTabs() {
  return (
    <div className={"relative z-10 flex h-[31px] border-b-2 border-[#9ba0a6] bg-[#dbe0e7] shadow-[inset_0_2px_0_#a9adb3] " + SONG}>
      <div className="flex w-[115px] items-center pl-[11px] text-[#444]">
        <Svg w={94} h={13}>
          <path d="M0 0H2V13H0ZM12 0V13L4 6.500ZM38 0V13L30 6.500ZM55 0V13L63 6.500ZM81 0V13L89 6.500ZM90 0H92V13H90Z" fill="#4a4d52" />
        </Svg>
      </div>
      <SheetTab label="Sheet1" active />
      <SheetTab label="Sheet2" />
      <SheetTab label="Sheet3" />
      <SheetTab
        w={82}
        label={
          <Svg w={28} h={23}>
            <path d="M9 4H26V17L22 20H9L6 17V12Z" fill="#dfe7f6" stroke="#5e74a6" strokeWidth="1.800" />
            <path d="M12 21V17H19V21" fill="#fff" stroke="#5e74a6" />
            <path d="M7 0V13M0 6.500H14M2 2L12 11M12 2L2 11" stroke="#d9922c" strokeWidth="1.800" />
            <circle cx="7" cy="6.500" r="2" fill="#ffe9a0" />
          </Svg>
        }
      />
      <div className="ml-auto flex w-[966px]">
        <div className="flex h-[29px] w-[13px] items-center justify-center border-2 border-[#85898f] bg-white">
          <div className="h-[16px] w-[2px] bg-[#8a8e94]" />
        </div>
        <Svg w={10} h={17} className="mt-[6px] ml-[10px]"><path d="M10 0V17L0 8.500Z" fill="#444" /></Svg>
        <div className="ml-[13px] flex h-[29px] w-[567px] items-center justify-center gap-[1.500px] rounded-[3px] border-2 border-[#8f949b] bg-gradient-to-b from-[#f4f6f9] to-[#dde1e9] pr-[3px]">
          <div className="h-[13px] w-[2px] bg-[#777b82]" />
          <div className="h-[13px] w-[2px] bg-[#777b82]" />
          <div className="h-[13px] w-[2px] bg-[#777b82]" />
          <div className="h-[13px] w-[2px] bg-[#777b82]" />
        </div>
        <div className="ml-auto h-full w-[7px] bg-[#eceef1]" />
      </div>
      <ImeBar />
    </div>
  );
}

function ImeBar() {
  return (
    <div className={"absolute -top-[13px] right-0 flex h-[40px] w-[272px] items-center border-2 border-r-0 border-[#cfd3d9] bg-[#fbfcfe] pl-[4px] " + UI}>
      <Svg w={33} h={36}>
        <path d="M5 8C-2 22 6 33 16.500 33C27 33 35 22 28 8" stroke="#4a8a78" strokeWidth="4.500" />
        <path d="M12 2V19C12 27 21 27 21 19V2" stroke="#e79a35" strokeWidth="7.500" />
        <path d="M12 3V19C12 26 21 26 21 19V3" stroke="#fbe3c0" strokeWidth="1" />
      </Svg>
      <span className="ml-[7px] w-[26px] text-[28px] leading-none font-medium text-[#4c82cc]">中</span>
      <Svg w={24} h={25} className="ml-[12px]"><path d="M13 0C30 8 22 28 4 23L0 19C12 20 18 12 13 0Z" fill="#5a8bd0" /></Svg>
      <Svg w={18} h={25} className="ml-[17px]">
        <circle cx="5" cy="6" r="3.700" stroke="#5a8bd0" strokeWidth="2.200" />
        <path d="M11 15H17V19L13 24H11L13 20H11Z" fill="#5a8bd0" />
      </Svg>
      <Svg w={32} h={23} className="ml-[10px]">
        <rect width="32" height="23" rx="2" fill="#5a8bd0" />
        <path d="M4 6H29M4 11H29" stroke="#fff" strokeWidth="3" strokeDasharray="3 1.500" />
        <path d="M4 17H7M9 17H23M25 17H28" stroke="#fff" strokeWidth="3" />
      </Svg>
      <Svg w={20} h={26} className="ml-[12px]">
        <circle cx="10" cy="6" r="5.500" fill="#a8a8a8" />
        <path d="M5 11H15C19 15 20 20 18 25H2C0 20 1 15 5 11Z" fill="#a8a8a8" />
      </Svg>
      <Svg w={27} h={26} className="ml-[14px]">
        <path d="M3 23L14 12" stroke="#5a8bd0" strokeWidth="5.500" strokeLinecap="round" />
        <path d="M22 1L18 6L20 9L25 7C27 15 18 18 13 14C9 7 14 1 22 1Z" fill="#5a8bd0" />
      </Svg>
    </div>
  );
}

/* ---------- status bar ---------- */

function ZoomKnob({ plus = false }: { plus?: boolean }) {
  return (
    <Svg w={29} h={29}>
      <circle cx="14.500" cy="14.500" r="13" fill="#f4f5f7" stroke="#73777d" strokeWidth="2" />
      <path d={plus ? "M7.500 14.500H21.500M14.500 7.500V21.500" : "M7.500 14.500H21.500"} stroke="#55595f" strokeWidth="3.500" />
    </Svg>
  );
}

function StatusBar() {
  return (
    <div className="flex h-[39px] items-center bg-gradient-to-b from-[#e3e6e9] to-[#babec2] pb-[2px] text-[22px] text-[#3f4347]">
      <span className="ml-[15px] w-[61px]">就绪</span>
      <div className="h-[35px] w-[2px] bg-[#9ea2a7]" />
      <div className="mr-[8px] ml-auto h-[35px] w-[2px] bg-[#9ea2a7]" />
      <div className="flex h-[35px] w-[34px] items-center justify-center rounded-[4px] border-2 border-[#c99a33] bg-gradient-to-b from-[#fbd978] to-[#fdeb98]">
        <Svg w={24} h={20}>
          <rect x="1" y="1" width="22" height="18" fill="#fff" stroke="#5b5f66" strokeWidth="2" />
          <path d="M8.500 1V19M15.500 1V19M1 7H23M1 13H23" stroke="#5b5f66" strokeWidth="2" />
        </Svg>
      </div>
      <Svg w={26} h={23} className="ml-[5px]">
        <rect x="1" y="1" width="24" height="21" fill="#9ba0a7" stroke="#5b5f66" strokeWidth="2" />
        <rect x="6" y="4" width="14" height="15" fill="#fff" stroke="#5b5f66" strokeWidth="1.500" />
        <path d="M9 8H17M9 11H17M9 14H17" stroke="#777b82" strokeWidth="1.500" />
      </Svg>
      <Svg w={26} h={23} className="ml-[9px]">
        <rect x="1" y="1" width="24" height="21" fill="#a3a7ad" stroke="#6b6f76" strokeWidth="2" />
        <path d="M2 2H8V13H2ZM10 2H16V13H10Z" fill="#fff" />
      </Svg>
      <span className="ml-[22px] w-[73px] text-[23px] tracking-[-0.2px]">100%</span>
      <ZoomKnob />
      <div className="relative h-[2px] w-[185px] bg-[#85898f]">
        <Svg w={18} h={25} className="absolute -top-[12px] left-[84px]">
          <path d="M1 1H17V17L9 24L1 17Z" fill="#f4f5f7" stroke="#666a70" strokeWidth="2" />
        </Svg>
      </div>
      <div className="mr-[8px]"><ZoomKnob plus /></div>
    </div>
  );
}

/* ---------- taskbar ---------- */

function TaskButton({ className = "", tone = "from-[#c3d0e6] to-[#a5b8d8]", children }: IconProps & { tone?: string; children: React.ReactNode }) {
  return (
    <div className={"flex h-[53px] shrink-0 items-center justify-center rounded-[4px] border-2 border-[#5d6b86] bg-gradient-to-b pb-[2px] shadow-[inset_0_0_0_1px_#e6edf8] " + tone + " " + className}>
      {children}
    </div>
  );
}

function StartOrb() {
  return (
    <Svg w={68} h={64} className="relative -mt-[12px] ml-[16px]">
      <defs>
        <radialGradient id="orb" cx=".5" cy=".95" r=".9"><stop offset="0" stopColor="#3fd0fb" /><stop offset=".45" stopColor="#2070b4" /><stop offset="1" stopColor="#173f74" /></radialGradient>
        <linearGradient id="gloss" x1="0" x2="0" y1="0" y2="1"><stop offset="0" stopColor="#fff" stopOpacity=".75" /><stop offset="1" stopColor="#fff" stopOpacity=".15" /></linearGradient>
      </defs>
      <circle cx="34" cy="35" r="32.500" fill="url(#orb)" stroke="#28456c" strokeWidth="2" />
      <path d="M4 29C8 -5 60 -5 64 29C50 37 18 23 4 29Z" fill="url(#gloss)" />
      <path d="M22 16C27 12 32 13 36 17L32 33C28 30 23 29 17 31Z" fill="#e8602f" />
      <path d="M39 18C44 21 50 21 57 18L51 34C46 36 40 37 35 34Z" fill="#8fbf48" />
      <path d="M17 34C22 31 27 32 31 35L28 49C24 46 19 45 13 47Z" fill="#5a9ee6" />
      <path d="M34 37C39 39 45 39 50 37L46 52C42 54 35 54 30 51Z" fill="#f9c445" />
    </Svg>
  );
}

function OfficeLogo({ letter, color, light }: { letter: string; color: string; light: string }) {
  return (
    <Svg w={31} h={31}>
      <path d="M1 7L7 1H30V30H1Z" fill={light} stroke={color} strokeWidth="2" />
      <path d="M4 9L9 4H27V27H4Z" fill="#fff" stroke={color} strokeOpacity=".4" />
      <text x="15.500" y="25" textAnchor="middle" fontFamily="Open Sans" fontWeight="800" fontSize="26" fill={color}>{letter}</text>
    </Svg>
  );
}

const gearTeeth = Array.from({ length: 12 }, (_, i) => i * 30);

function Taskbar() {
  return (
    <div className="relative flex h-[55px] items-start border-t-2 border-[#4c5666] bg-[linear-gradient(90deg,#7d8ea8_0px,#8394ae_150px,#8fa2c2_220px,#a9bbda_275px,#a9bbda_1720px,#8292ab_1795px,#8090a8_2360px)] shadow-[inset_0_2px_0_#c3cfe3]">
      <StartOrb />
      <Svg w={33} h={31} className="mt-[9px] ml-[40px]">
        <path d="M8 1C3 1 1 5 1 9C1 14 5 16 9 16C13 16 15 13 15 10C11 10 9 7 10 2Z" fill="#a6c62e" />
        <path d="M24 1C18 1 15 5 16 9L24 14C30 14 31 9 31 7C31 3 28 1 24 1Z" fill="#6d9fe8" />
        <path d="M2 18C0 25 3 30 9 30C14 30 16 26 16 22C16 19 14 17 12 17C11 21 6 22 2 18Z" fill="#efb92f" />
        <path d="M19 17L29 16C32 19 32 26 29 29C26 31 20 30 18 28C22 25 22 20 19 17Z" fill="#dd5940" />
      </Svg>
      <Svg w={32} h={33} className="mt-[7px] ml-[59px]">
        <path d="M26 22C23 31 6 31 6 18C6 5 26 5 26 18H9" stroke="#3d8fd9" strokeWidth="5.500" />
        <path d="M8 12C11 6 20 6 24 11" stroke="#8fc7f2" strokeWidth="1.500" />
        <path d="M4 31C-3 25 13 3 26 2C31 2 30 6 28 9" stroke="#efb52f" strokeWidth="3" />
      </Svg>
      <div className="ml-[28px] flex h-[53px] w-[81px] rounded-[4px] border-2 border-[#5d6b86] bg-[#b4c3de]">
        <div className="flex w-[70px] items-center justify-center rounded-[3px] border-r-2 border-[#5d6b86] bg-gradient-to-br from-[#e9eff8] to-[#a9bbd9] shadow-[inset_0_0_0_1px_#f1f5fb]">
          <Svg w={30} h={28}>
            <path d="M1 4L2 1H10L12 4H27V24H1Z" fill="#e9c867" stroke="#c49a39" />
            <path d="M3 8H29V26H3Z" fill="#f6df90" stroke="#d0aa4a" />
            <path d="M7 27V18L11 15H23L27 18V27H21V21H13V27Z" fill="#6fbce4" stroke="#3d85ba" />
          </Svg>
        </div>
      </div>
      <Svg w={30} h={32} className="mt-[9px] ml-[30px]">
        <path d="M25 21C22 30 5 30 5 17C5 4 25 4 25 17H8" stroke="#fff" strokeWidth="8" strokeOpacity=".6" />
        <path d="M25 21C22 30 5 30 5 17C5 4 25 4 25 17H8" stroke="#4fae33" strokeWidth="5.500" />
        <path d="M3 28C0 20 10 6 27 2" stroke="#6cc04b" strokeWidth="2" />
      </Svg>
      <TaskButton className="ml-[29px] w-[80px]" tone="from-[#aaa6c6] to-[#8c6eaa]">
        <Svg w={31} h={31}>
          <rect width="31" height="31" fill="#4f4672" />
          {gearTeeth.map((a) => (
            <rect key={a} x="14" y="1" width="3.500" height="6" rx="1" transform={`rotate(${a} 15.5 15.5)`} fill="#e9e9ee" />
          ))}
          <circle cx="15.500" cy="15.500" r="10.500" fill="#3a3655" stroke="#e9e9ee" strokeWidth="2.500" />
          <path d="M7 14H24M7 18H24" stroke="#6f6896" strokeWidth="1.500" />
        </Svg>
      </TaskButton>
      <TaskButton className="ml-[5px] w-[80px]" tone="from-[#dccbd3] to-[#aebbd8]"><OfficeLogo letter="P" color="#d2552a" light="#f9d9c8" /></TaskButton>
      <TaskButton className="ml-[5px] w-[80px]">
        <Svg w={31} h={31}>
          <rect width="31" height="31" rx="5" fill="#3f8ff0" />
          <path d="M6 8V22L15.500 14L19 22L25 17V8" stroke="#fff" strokeWidth="2.200" />
        </Svg>
      </TaskButton>
      <TaskButton className="ml-[5px] w-[80px]" tone="from-[#f0f5fb] to-[#c3d1e8]"><ExcelLogo /></TaskButton>
      <TaskButton className="ml-[5px] w-[80px]">
        <Svg w={30} h={30}>
          <circle cx="7" cy="8" r="5" fill="#999" stroke="#222" strokeWidth="3" />
          <path d="M5 12H11V29H5Z" fill="#2b2b2b" />
          <rect x="13" y="10" width="14" height="10" fill="#9aa23a" stroke="#4b4f1d" strokeWidth="2" />
        </Svg>
      </TaskButton>

      <div className="ml-auto flex items-start">
        <Svg w={32} h={33} className="mt-[5px]">
          <rect x="3" y="3" width="26" height="28" rx="4" transform="rotate(-8 16 17)" fill="#e9592b" />
          <path d="M24 10C17 7 10 8 10 12C10 17 22 15 22 20C22 25 14 25 8 23" stroke="#fff" strokeWidth="4.500" />
        </Svg>
        <div className="mt-[6px] ml-[11px] flex size-[30px] items-center justify-center rounded-full border-2 border-[#9aa8cc] bg-[#0d22a8] text-[21px] leading-none font-bold text-white">?</div>
        <Svg w={17} h={32} className="mt-[4px] ml-[18px]">
          <path d="M6 1H15V7H6ZM1 5H10V11H1Z" fill="#8090a8" stroke="#fff" strokeWidth="2" />
          <path d="M3 25H13L8 31Z" fill="#fff" />
        </Svg>
        <Svg w={17} h={12} className="mt-[21px] ml-[17px]"><path d="M1 11L8.500 1L16 11Z" fill="#fff" stroke="#5d6b86" /></Svg>
        <Svg w={32} h={32} className="mt-[10px] ml-[21px]">
          <circle cx="16" cy="16" r="15" fill="#e7e23a" stroke="#8fa02a" strokeWidth="1" />
          <path d="M6 5C12 -1 24 0 28 7L22 8C17 4 11 4 6 5ZM27 24C22 31 11 33 4 25L10 25C16 28 22 27 27 24Z" fill="#39912b" />
          <path d="M9 16H23M16 9V23" stroke="#1c5d20" strokeWidth="5" />
        </Svg>
        <Svg w={32} h={30} className="mt-[11px] ml-[12px]">
          <path d="M3 1V29" stroke="#3f4858" strokeWidth="6" />
          <path d="M3 1V29" stroke="#fff" strokeWidth="3" />
          <path d="M5 3C12 0 16 6 24 3V15C16 18 12 12 5 15Z" fill="#fff" stroke="#4a5364" />
          <circle cx="21" cy="21" r="8.500" fill="#dc3a2b" stroke="#8e1f16" />
          <path d="M17 17L25 25M25 17L17 25" stroke="#fff" strokeWidth="3" />
        </Svg>
        <Svg w={30} h={30} className="mt-[11px] ml-[12px]">
          <path d="M4 6L8 2H14V28H3V6Z" fill="#3b3f47" stroke="#eee" strokeWidth="1.500" />
          <path d="M15 1V8M23 1V8M12 9H26V15C24 19 14 19 12 15ZM19 18V28H15" fill="#fff" stroke="#fff" strokeWidth="2.500" />
          <path d="M2 15L15 28M15 15L2 28" stroke="#d5281c" strokeWidth="5" />
        </Svg>
        <Svg w={32} h={30} className="mt-[12px] ml-[15px]">
          <path d="M1 19H5V25H1ZM8 15H12V25H8ZM15 10H19V25H15ZM22 5H28V25H22Z" fill="#9b9a8c" stroke="#4c5058" strokeWidth="1.500" />
          <circle cx="20" cy="20" r="7" fill="#f2a52e" />
          <path d="M20 11V29M11 20H29M14 14L26 26M26 14L14 26" stroke="#f2a52e" strokeWidth="2" />
        </Svg>
        <Svg w={31} h={28} className="mt-[12px] ml-[12px]">
          <path d="M1 9H6L13 2V26L6 19H1Z" fill="#fff" stroke="#4a5364" strokeWidth="1.500" />
          <path d="M17 10C19 12 19 16 17 18M21 7C24 10 24 18 21 21M25 4C30 9 30 19 25 24" stroke="#fff" strokeWidth="1.800" />
        </Svg>
        <Svg w={30} h={30} className="mt-[11px] ml-[13px]">
          <path d="M15 1C19 4 24 5 28 5C29 17 24 25 15 29C6 25 1 17 2 5C6 5 11 4 15 1Z" fill="#4b9a2f" stroke="#e9efdf" strokeWidth="3" />
          <path d="M17 6L9 16H14L12 24L21 13H16L19 6Z" fill="#fff" />
        </Svg>
        <span className="mt-[10px] ml-[35px] w-[81px] text-[23px] leading-[32px] tracking-[-0.5px] text-white">10:12</span>
        <div className="h-[53px] w-[27px] border-2 border-[#3d4757] bg-gradient-to-br from-[#8b98ad] to-[#57647a] shadow-[inset_0_0_0_1px_#aab6ca]" />
      </div>

      <Svg w={24} h={30} className="absolute top-[25px] left-[507px]">
        <path d="M1 1V27L7 21L11 30H17L13 20H22Z" fill="#fff" stroke="#222" strokeWidth="1.500" />
      </Svg>
    </div>
  );
}

export default function App() {
  return (
    <div className={"flex h-[1640px] w-[2360px] flex-col overflow-hidden bg-black " + UI}>
      <div className="mt-[112px] flex h-[1416px] shrink-0 flex-col overflow-hidden bg-[#e0e3e7]">
        <div className="bg-gradient-to-b from-[#e8ebee] to-[#dde0e4]">
          <TitleBar />
          <TabRow />
        </div>
        <Ribbon />
        <FormulaBar />
        <Worksheet />
        <SheetTabs />
        <StatusBar />
        <Taskbar />
      </div>
      <div className="mx-auto mt-[86px] h-[10px] w-[630px] shrink-0 rounded-full bg-white" />
    </div>
  );
}
